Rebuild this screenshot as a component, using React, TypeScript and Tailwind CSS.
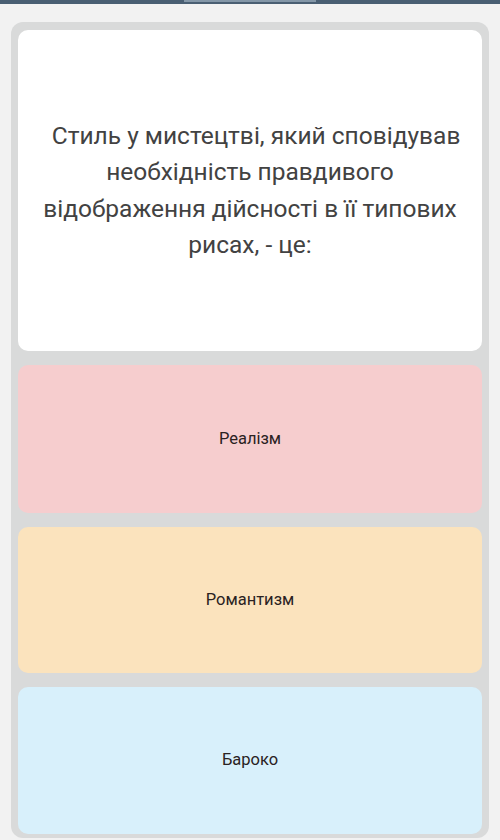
export default function App() {
  const options = [
    { label: "Реалізм", bg: "bg-[#f6cdce]", h: "h-[148px]" },
    { label: "Романтизм", bg: "bg-[#fbe3bd]", h: "h-[146px]" },
    { label: "Бароко", bg: "bg-[#d8f0fb]", h: "h-[147px]" },
  ];
  return (
    <div className="w-[500px] h-[840px] overflow-hidden bg-[#f2f2f2] font-['Roboto',sans-serif]">
      <div className="h-[4px] bg-[#4a5f73] flex justify-center">
        <div className="w-[132px] h-[2px] bg-[#8497a8]" />
      </div>
      <div className="mx-[11px] mt-[18px] bg-[#d9dada] rounded-[12px] px-[7px] pt-[8px] pb-[4px] flex flex-col gap-[14px]">
        <div className="h-[321px] bg-white rounded-[10px] flex items-center justify-center px-[8px]">
          <p className="text-[24.5px] leading-[36.5px] text-[#424242] text-center whitespace-pre-wrap">
            {"  Стиль у мистецтві, який сповідував\nнеобхідність правдивого\nвідображення дійсності в її типових\nрисах, - це:"}
          </p>
        </div>
        {options.map((o) => (
          <div key={o.label} className={`${o.h} ${o.bg} rounded-[10px] flex items-center justify-center`}>
            <span className="text-[16.5px] text-[#2a2222]">{o.label}</span>
          </div>
        ))}
      </div>
    </div>
  );
}
